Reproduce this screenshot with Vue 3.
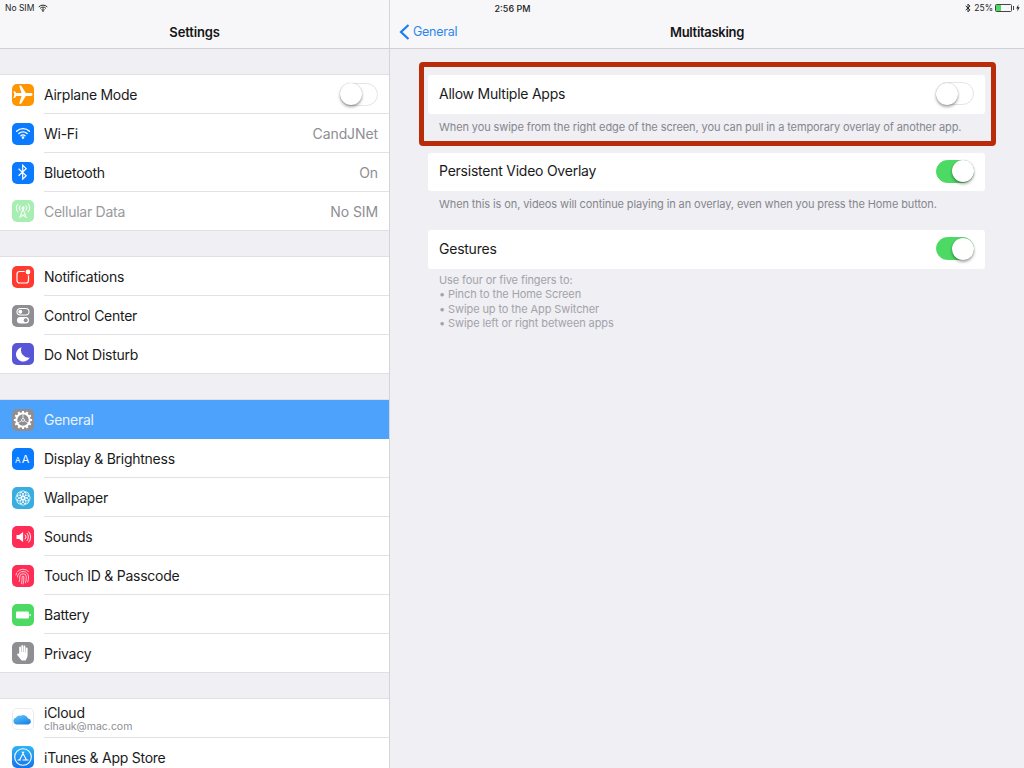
<script setup>
const groups = [
  [
    { id: 'plane', label: 'Airplane Mode', color: 'orange', toggle: true },
    { id: 'wifi', label: 'Wi-Fi', color: 'blue', value: 'CandJNet' },
    { id: 'bt', label: 'Bluetooth', color: 'blue', value: 'On' },
    { id: 'cell', label: 'Cellular Data', color: 'mint', value: 'No SIM', dim: true },
  ],
  [
    { id: 'notif', label: 'Notifications', color: 'red' },
    { id: 'cc', label: 'Control Center', color: 'gray' },
    { id: 'dnd', label: 'Do Not Disturb', color: 'indigo' },
  ],
  [
    { id: 'gear', label: 'General', color: 'gray', active: true },
    { id: 'aa', label: 'Display & Brightness', color: 'blue' },
    { id: 'flower', label: 'Wallpaper', color: 'teal' },
    { id: 'sound', label: 'Sounds', color: 'pink' },
    { id: 'touch', label: 'Touch ID & Passcode', color: 'pink' },
    { id: 'batt', label: 'Battery', color: 'green' },
    { id: 'hand', label: 'Privacy', color: 'gray' },
  ],
  [
    { id: 'cloud', label: 'iCloud', sub: 'clhauk@mac.com', color: 'white' },
    { id: 'store', label: 'iTunes & App Store', color: 'sky' },
  ],
]
const sections = [
  { label: 'Allow Multiple Apps', on: false, notes: ['When you swipe from the right edge of the screen, you can pull in a temporary overlay of another app.'] },
  { label: 'Persistent Video Overlay', on: true, notes: ['When this is on, videos will continue playing in an overlay, even when you press the Home button.'] },
  { label: 'Gestures', on: true, notes: ['Use four or five fingers to:', '• Pinch to the Home Screen', '• Swipe up to the App Switcher', '• Swipe left or right between apps'] },
]
const petals = [0, 45, 90, 135, 180, 225, 270, 315]
const teeth = [0, 30, 60, 90, 120, 150]
</script>

<template>
  <div class="screen">
    <aside class="side">
      <header class="nav"><span class="nav-title">Settings</span></header>
      <section v-for="(group, g) in groups" :key="g" class="group">
        <div v-for="r in group" :key="r.id" class="row" :class="{ active: r.active }">
          <span class="icon" :class="r.color">
            <svg viewBox="0 0 22 22" width="22" height="22">
              <path v-if="r.id === 'plane'" transform="rotate(90 11 11) translate(-.5 -.5) scale(.96)" fill="#fff" d="M21 16v-2l-8-5V3.5c0-.83-.67-1.5-1.5-1.5S10 2.67 10 3.5V9l-8 5v2l8-2.5V19l-2 1.5V22l3.5-1 3.5 1v-1.5L13 19v-5.5l8 2.5z" />
              <g v-else-if="r.id === 'wifi'" fill="none" stroke="#fff" stroke-width="1.4" stroke-linecap="round">
                <path d="M4.600 8.200a9.200 9.200 0 0 1 12.800 0" />
                <path d="M6.900 10.500a5.900 5.900 0 0 1 8.200 0" />
                <path d="M9 12.700a2.800 2.800 0 0 1 4 0" />
                <circle cx="11" cy="14.600" r=".6" fill="#fff" />
              </g>
              <path v-else-if="r.id === 'bt'" fill="none" stroke="#fff" stroke-width="1.2" d="M6.600 6.800l7.600 7L10.700 17.200V3.200l3.500 3.500-7.600 7" />
              <g v-else-if="r.id === 'cell'" fill="none" stroke="#fff" stroke-width="1">
                <path d="M11 9l-3.400 9M11 9l3.400 9M9 14.500l4 2M13 14.500l-4 2" />
                <circle cx="11" cy="8" r="1.200" fill="#fff" />
                <path d="M8.200 5.400a4 4 0 0 0 0 5.200M13.800 5.400a4 4 0 0 1 0 5.200M6 3.800a6.600 6.600 0 0 0 0 8.400M16 3.800a6.600 6.600 0 0 1 0 8.400" />
              </g>
              <g v-else-if="r.id === 'notif'">
                <rect x="5" y="5.500" width="11.500" height="11.500" rx="2.500" fill="none" stroke="#fff" stroke-width="1.200" />
                <circle cx="16" cy="6" r="3.400" fill="#ff3b30" />
                <circle cx="16" cy="6" r="2.400" fill="#fff" />
              </g>
              <g v-else-if="r.id === 'cc'">
                <rect x="5" y="3.500" width="12" height="6.500" rx="3.250" fill="none" stroke="#fff" stroke-width="1.100" />
                <circle cx="8.300" cy="6.750" r="2" fill="#fff" />
                <rect x="5" y="12" width="12" height="6.500" rx="3.250" fill="#fff" />
                <circle cx="13.700" cy="15.250" r="2" fill="#8e8e93" />
              </g>
              <path v-else-if="r.id === 'dnd'" fill="#fff" d="M9.600 4.200a7.300 7.300 0 1 0 8.200 10.400A7.600 7.600 0 0 1 9.600 4.200z" />
              <g v-else-if="r.id === 'gear'" fill="none" stroke="#fff">
                <path v-for="t in teeth" :key="t" :transform="`rotate(${t} 11 11)`" stroke-width="2" d="M11 1.900v18.200" />
                <circle cx="11" cy="11" r="6.700" fill="#8e8e93" stroke-width="2" />
                <circle cx="11" cy="11" r="1.500" stroke-width=".8" />
                <path stroke-width=".8" d="M11 4.500v5M12.400 11.800l4.200 2.500M9.600 11.800l-4.200 2.500" />
              </g>
              <g v-else-if="r.id === 'aa'" fill="#fff" font-family="Inter, sans-serif" text-anchor="middle">
                <text x="5.800" y="15" font-size="8">A</text>
                <text x="13.500" y="15" font-size="11">A</text>
              </g>
              <g v-else-if="r.id === 'flower'" fill="none" stroke="#fff" stroke-width=".8">
                <circle v-for="p in petals" :key="p" cx="11" cy="6.800" r="3" :transform="`rotate(${p} 11 11)`" />
                <circle cx="11" cy="11" r="1.800" />
              </g>
              <g v-else-if="r.id === 'sound'">
                <path fill="#fff" d="M4.500 9h2.600l4-3v10l-4-3H4.500z" />
                <path fill="none" stroke="#fff" stroke-width=".9" d="M13 8.700a3.400 3.400 0 0 1 0 4.600M14.800 7a6 6 0 0 1 0 8M16.500 5.500a8.200 8.200 0 0 1 0 11" />
              </g>
              <g v-else-if="r.id === 'touch'" fill="none" stroke="#fff" stroke-width=".8" opacity=".9" stroke-linecap="round">
                <path d="M5.500 12a5.500 5.500 0 0 1 11 0c0 2-.2 3.500-.7 5" />
                <path d="M7.300 16.500c.4-1.400.4-3 .4-4.500a3.300 3.300 0 0 1 6.600 0c0 2-.2 4-.8 5.800" />
                <path d="M9.500 18.500c.5-2 .6-4.200.6-6.500a.9.9 0 0 1 1.800 0c0 2.600-.2 5-.8 7" />
                <path d="M5.500 6.500A7.500 7.500 0 0 1 16.500 6.500M4 10a7.500 7.500 0 0 1 .6-2" />
              </g>
              <g v-else-if="r.id === 'batt'" fill="#fff">
                <rect x="4" y="7.500" width="13" height="7" rx="1.200" />
                <rect x="17.500" y="10" width="1.200" height="2" />
              </g>
              <path v-else-if="r.id === 'hand'" fill="#fff" d="M7.200 10.500V5.500a.9.9 0 0 1 1.800 0V10h.4V3.900a.9.9 0 0 1 1.800 0V10h.4V4.500a.9.9 0 0 1 1.800 0V10.500h.4V6.500a.9.9 0 0 1 1.800 0V13c0 1.300-.3 2.300-.9 3.300l-1 2.200H9.700L8 16.500c-.7-1-1.500-2-2.600-3.300-.9-1.100.4-2.100 1.300-1.300z" />
              <g v-else-if="r.id === 'cloud'">
                <defs>
                  <linearGradient id="cloudFill" x1="0" y1="0" x2=".6" y2="1">
                    <stop offset="0" stop-color="#62c8f6" />
                    <stop offset="1" stop-color="#1f86ea" />
                  </linearGradient>
                </defs>
                <path fill="url(#cloudFill)" d="M4.800 16.500a3.500 3.500 0 0 1-1-6.800 4.800 4.800 0 0 1 5-2 5.200 5.200 0 0 1 7.300 2.900 3 3 0 0 1 .6 5.900z" />
              </g>
              <g v-else-if="r.id === 'store'" fill="none" stroke="#fff" stroke-width="1.100" stroke-linecap="round">
                <circle cx="11" cy="11" r="8.300" />
                <path d="M11.800 6l-4.300 8M10.200 6l4.300 8M6 14h2.500M11 14h5" />
              </g>
            </svg>
          </span>
          <div class="row-body">
            <div class="labels">
              <span class="label" :class="{ dim: r.dim }">{{ r.label }}</span>
              <span v-if="r.sub" class="sub">{{ r.sub }}</span>
            </div>
            <span v-if="r.value" class="value">{{ r.value }}</span>
            <span v-if="r.toggle" class="toggle"><i class="knob"></i></span>
          </div>
        </div>
      </section>
    </aside>

    <main class="pane">
      <header class="nav">
        <a class="back">
          <svg viewBox="0 0 11 16" width="11" height="16"><path d="M9.500 1L2 8l7.500 7" fill="none" stroke="#1a7df2" stroke-width="2.200" /></svg>
          <span>General</span>
        </a>
        <span class="nav-title title-wide">Multitasking</span>
      </header>
      <div class="content">
        <section v-for="s in sections" :key="s.label" class="block">
          <div class="card">
            <span class="card-label">{{ s.label }}</span>
            <span class="toggle" :class="{ on: s.on }"><i class="knob"></i></span>
          </div>
          <div class="notes" :class="{ list: s.notes.length > 1 }">
            <p v-for="n in s.notes" :key="n">{{ n }}</p>
          </div>
        </section>
      </div>
    </main>

    <div class="status">
      <div class="st-left">
        <span>No SIM</span>
        <svg viewBox="0 0 11 8" width="10" height="8" fill="none" stroke="#222" stroke-width="1.100">
          <path d="M.8 2.800a6.600 6.600 0 0 1 9.400 0M2.300 4.400a4.400 4.400 0 0 1 6.400 0M3.800 5.900a2.200 2.200 0 0 1 3.400 0" />
          <circle cx="5.500" cy="7.200" r=".5" fill="#222" />
        </svg>
      </div>
      <div class="st-time">2:56 PM</div>
      <div class="st-right">
        <svg class="st-bt" viewBox="0 0 7 11" width="6" height="10"><path d="M.8 3l5 4.700L3.500 10V1l2.300 2.300-5 4.700" fill="none" stroke="#222" stroke-width="1.100" /></svg>
        <span class="st-pct">25%</span>
        <span class="st-batt"><i></i></span>
        <svg class="st-bolt" viewBox="0 0 5 9" width="4" height="8"><path d="M3 0L.3 5h1.800L1.600 9l3-5.300H2.700z" fill="#222" /></svg>
      </div>
    </div>

    <div class="callout"></div>
  </div>
</template>

<style>
html, body { margin: 0; background: #efeff4; }
</style>

<style scoped>
.screen {
  position: relative;
  display: flex;
  width: 1024px;
  height: 768px;
  overflow: hidden;
  background: #efeff4;
  color: #1a1a1c;
  font-family: Inter, "Liberation Sans", sans-serif;
}
.side {
  box-sizing: border-box;
  flex: 0 0 390px;
  height: 768px;
  overflow: hidden;
  border-right: 1px solid #d4d4da;
}
.pane { flex: 1; min-width: 0; }
.nav {
  position: relative;
  box-sizing: border-box;
  display: flex;
  align-items: center;
  justify-content: center;
  height: 49px;
  padding-top: 15px;
  background: #f7f7f9;
  border-bottom: 1px solid #cfcfd6;
}
.nav-title { font-size: 13px; font-weight: 600; color: #141416; letter-spacing: -0.15px; }
.title-wide { letter-spacing: -0.3px; }
.group {
  margin-top: 25px;
  background: #fff;
  border-top: 1px solid #dfdfe4;
  border-bottom: 1px solid #dfdfe4;
}
.row { display: flex; align-items: center; height: 39px; background: #fff; }
.row:last-child .row-body { border-bottom: 0; }
.row:last-child { height: 38px; }
.row.active { background: #4da2fb; }
.row.active .label { color: #e8f2ff; }
.icon {
  flex: none;
  width: 22px;
  height: 22px;
  margin: 0 10px 0 12px;
  border-radius: 5px;
  overflow: hidden;
}
.icon svg { display: block; }
.orange { background: #ff9500; }
.blue { background: #0a7aff; }
.mint { background: #a6eeb2; }
.red { background: #ff3b30; }
.gray { background: #8e8e93; }
.indigo { background: #5856d6; }
.teal { background: #38aee0; }
.pink { background: #ff2d55; }
.green { background: #4cd964; }
.white { background: #fff; box-shadow: inset 0 0 0 1px #ececf0; }
.sky { background: linear-gradient(#2fb4f6, #1674ea); }
.row-body {
  box-sizing: border-box;
  flex: 1;
  min-width: 0;
  align-self: stretch;
  display: flex;
  align-items: center;
  justify-content: space-between;
  padding-right: 11px;
  border-bottom: 1px solid #e2e2e6;
}
.active .row-body { border-bottom-color: transparent; }
.labels { display: flex; flex-direction: column; }
.label { font-size: 14px; letter-spacing: -0.26px; }
.label.dim { color: #9a9a9e; }
.sub { font-size: 10.500px; color: #8e8e93; line-height: 12px; margin: .5px 0 -.5px; }
.value { font-size: 14px; color: #8e8e93; letter-spacing: -0.1px; }
.toggle {
  position: relative;
  box-sizing: border-box;
  display: block;
  flex: none;
  width: 38px;
  height: 23px;
  border: 1px solid #e4e4e8;
  border-radius: 12px;
  background: #fff;
}
.card .toggle { margin-bottom: -.5px; }
.knob {
  position: absolute;
  top: -.5px;
  left: -1px;
  width: 22px;
  height: 22px;
  border-radius: 50%;
  background: #fff;
  box-shadow: 0 2px 3px rgba(0, 0, 0, .35), 0 0 1px rgba(0, 0, 0, .3);
}
.toggle.on { background: #4cd964; border-color: #4cd964; }
.toggle.on .knob { left: auto; right: -1px; }
.back {
  position: absolute;
  left: 9px;
  top: 24px;
  display: flex;
  align-items: center;
  gap: 3px;
  color: #2b86ee;
  font-size: 12.500px;
  letter-spacing: -0.25px;
  line-height: 16px;
}
.content { padding: 26px 39px 0 38px; }
.block { margin-bottom: 13px; }
.card {
  box-sizing: border-box;
  display: flex;
  align-items: center;
  justify-content: space-between;
  height: 38.500px;
  padding: 0 11px 2px;
  background: #fff;
  border-radius: 3px;
}
.card-label { font-size: 14px; letter-spacing: -0.24px; }
.notes { padding: 6px 11px 0; font-size: 11px; letter-spacing: -0.1px; line-height: 14.500px; color: #86868c; min-height: 20px; }
.notes.list { color: #a3a3a9; padding-top: 4px; }
.notes p { margin: 0; }
.status {
  position: absolute;
  inset: 0 0 auto 0;
  display: flex;
  justify-content: space-between;
  align-items: center;
  height: 16px;
  padding: 0 4px 0 5px;
  font-size: 8.500px;
  color: #222;
}
.st-left, .st-right { display: flex; align-items: center; gap: 4px; flex: 1; }
.st-right { justify-content: flex-end; gap: 2px; }
.st-pct { margin-left: 1px; }
.st-time { font-size: 9px; font-weight: 500; flex: 0 0 auto; }
.st-batt {
  position: relative;
  box-sizing: border-box;
  width: 17px;
  height: 8px;
  margin-right: 2px;
  border: 1px solid #444;
  border-radius: 1.500px;
}
.st-batt::after {
  content: "";
  position: absolute;
  right: -3px;
  top: 1px;
  width: 1px;
  height: 4px;
  background: #444;
}
.st-batt i { position: absolute; left: 0; top: 0; bottom: 0; width: 5px; background: #4cd964; }
.callout {
  position: absolute;
  left: 419px;
  top: 62px;
  box-sizing: border-box;
  width: 577px;
  height: 84px;
  border: 5px solid #b92c0a;
  border-radius: 4px;
  pointer-events: none;
}
</style>
